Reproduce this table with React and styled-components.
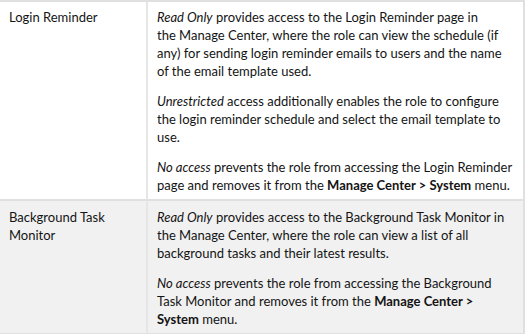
import React from "react";
import styled, { createGlobalStyle } from "styled-components";

const Global = createGlobalStyle`
  html, body { margin: 0; padding: 0; background: #ffffff; }
  body { font-family: Lato, "Noto Sans", sans-serif; color: #141414; }
`;

const Table = styled.div`
  width: 525px;
  display: grid;
  grid-template-columns: 146px 1fr;
  border-top: 2px solid #e0e0e0;
  border-right: 2px solid #e0e0e0;
  box-sizing: border-box;
  font-size: 13px;
  line-height: 18px;
`;

const Cell = styled.div`
  background: ${(p) => (p.$shaded ? "#f1f1f1" : "#ffffff")};
  padding: ${(p) => (p.$shaded ? "7px" : "6px")} ${(p) => (p.$desc ? "6px" : "9px")} 5px 9px;
  border-bottom: 2px solid #e0e0e0;
  border-left: ${(p) => (p.$desc ? "2px solid #e6e6e6" : "none")};
`;

const Para = styled.p`
  margin: 0 0 12px 0;
  white-space: nowrap;
  &:last-child { margin-bottom: 0; }
`;

const Em = styled.em`
  font-style: italic;
`;

const Strong = styled.strong`
  font-weight: 700;
`;

export default function App() {
  return (
    <>
      <Global />
      <Table>
        <Cell>Login Reminder</Cell>
        <Cell $desc>
          <Para>
            <Em>Read Only</Em> provides access to the Login Reminder page in<br />
            the Manage Center, where the role can view the schedule (if<br />
            any) for sending login reminder emails to users and the name<br />
            of the email template used.
          </Para>
          <Para>
            <Em>Unrestricted</Em> access additionally enables the role to configure<br />
            the login reminder schedule and select the email template to<br />
            use.
          </Para>
          <Para>
            <Em>No access</Em> prevents the role from accessing the Login Reminder<br />
            page and removes it from the <Strong>Manage Center &gt; System</Strong> menu.
          </Para>
        </Cell>
        <Cell $shaded>Background Task Monitor</Cell>
        <Cell $shaded $desc>
          <Para>
            <Em>Read Only</Em> provides access to the Background Task Monitor in<br />
            the Manage Center, where the role can view a list of all<br />
            background tasks and their latest results.
          </Para>
          <Para>
            <Em>No access</Em> prevents the role from accessing the Background<br />
            Task Monitor and removes it from the <Strong>Manage Center &gt;</Strong><br />
            <Strong>System</Strong> menu.
          </Para>
        </Cell>
      </Table>
    </>
  );
}
